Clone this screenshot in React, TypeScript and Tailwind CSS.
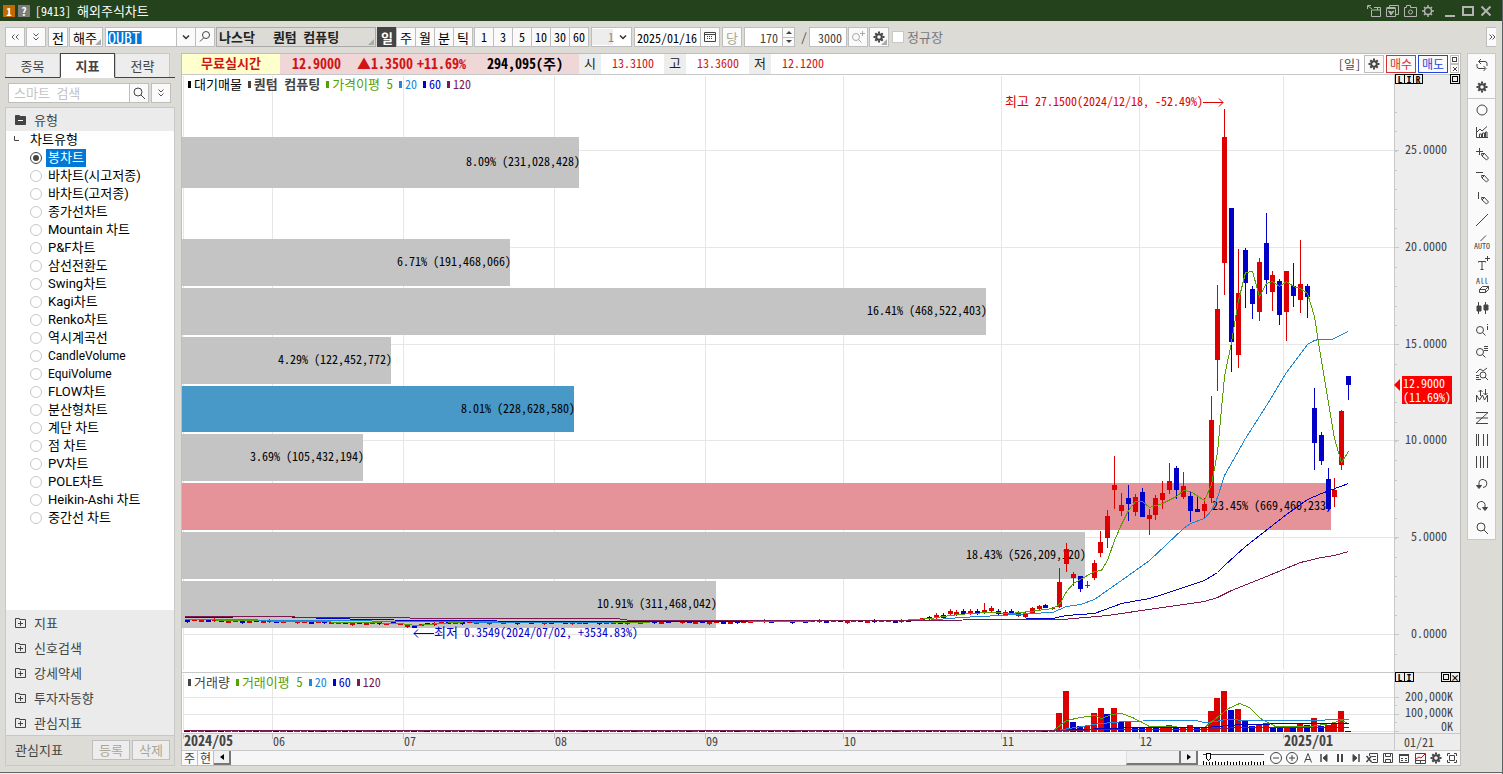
import React from 'react';
import clsx from 'clsx';

const RED = '#dc0000';
const BLUE = '#0000c8';
const GREEN = '#55a005';
const SKY = '#1e87d7';
const PLUM = '#7d1950';

// center x, high, low, body top, body bottom, r = up / b = down
type Candle = [number, number, number, number, number, 'r' | 'b'];

const candles: Candle[] = [
  [1032, 607, 613, 608, 613, 'r'], [1039, 605, 610, 606, 609, 'r'], [1045, 604, 608, 605, 608, 'b'],
  [1052, 607, 610, 608, 609, 'r'], [1059, 568, 608, 582, 607, 'r'], [1066, 543, 572, 549, 564, 'r'],
  [1073, 572, 586, 574, 578, 'r'], [1080, 576, 592, 576, 589, 'b'], [1087, 581, 588, 585, 586, 'r'],
  [1094, 560, 580, 563, 578, 'r'], [1100, 531, 557, 542, 553, 'r'], [1107, 510, 548, 516, 538, 'r'],
  [1114, 456, 509, 485, 490, 'r'], [1121, 493, 516, 505, 511, 'r'], [1128, 485, 521, 498, 504, 'b'],
  [1135, 494, 516, 497, 512, 'r'], [1142, 488, 517, 492, 517, 'b'], [1149, 509, 535, 515, 519, 'r'],
  [1155, 495, 520, 498, 515, 'r'], [1162, 481, 509, 493, 500, 'r'], [1169, 463, 494, 481, 490, 'r'],
  [1176, 466, 499, 468, 490, 'b'], [1183, 472, 499, 486, 497, 'r'], [1190, 492, 522, 496, 511, 'b'],
  [1197, 497, 512, 509, 512, 'b'], [1204, 498, 519, 504, 511, 'r'], [1211, 396, 503, 420, 498, 'r'],
  [1217, 285, 391, 309, 360, 'r'], [1224, 109, 295, 137, 263, 'r'], [1231, 208, 372, 208, 342, 'b'],
  [1238, 249, 368, 293, 355, 'r'], [1245, 248, 308, 250, 283, 'b'], [1252, 286, 319, 289, 304, 'b'],
  [1259, 258, 321, 262, 312, 'r'], [1266, 213, 294, 243, 280, 'b'], [1272, 271, 311, 275, 292, 'r'],
  [1279, 279, 325, 281, 315, 'b'], [1286, 271, 341, 271, 312, 'r'], [1293, 263, 307, 286, 296, 'b'],
  [1300, 240, 313, 284, 300, 'r'], [1307, 284, 318, 286, 297, 'b'], [1314, 388, 470, 408, 443, 'b'],
  [1321, 432, 465, 435, 461, 'b'], [1328, 468, 511, 479, 509, 'b'], [1334, 478, 507, 490, 497, 'r'],
  [1341, 410, 470, 411, 465, 'r'], [1348, 376, 400, 376, 385, 'b'],
];

// close levels of the quiet months, from May to the end of October
const flatLevels = [
  620, 619, 620, 620, 619, 620, 621, 620, 621, 621, 620, 621, 620, 621, 621, 620, 621, 621, 622, 621,
  621, 622, 622, 622, 623, 622, 623, 622, 622, 623, 622, 623, 625, 626, 624, 623, 623, 622, 622, 622,
  622, 621, 622, 621, 622, 621, 622, 621, 622, 621, 622, 621, 622, 622, 621, 622, 622, 622, 622, 621,
  622, 622, 622, 622, 622, 621, 622, 621, 621, 622, 621, 620, 621, 621, 622, 621, 622, 621, 622, 622,
  621, 621, 621, 620, 620, 621, 620, 620, 621, 620, 621, 620, 620, 621, 620, 620, 621, 620, 620, 621,
  620, 620, 620, 621, 620, 620, 619, 618, 617, 615, 615, 611, 612, 611, 611, 611, 610, 608, 611, 612,
  611, 613, 614,
];

const flatCandles: Candle[] = flatLevels.map((y, i) => {
  const x = 187 + Math.round(i * 6.87);
  const wick = i > 108 ? 2 : i % 4 === 0 ? 1 : 0;
  return [x, i === 116 ? 603 : y - wick, y + 2 + wick, y, i > 108 ? y + 3 : y + 2, (i * 7) % 5 < 2 ? 'b' : 'r'];
});

const profile = [
  { y: 137, h: 51, x: 579, label: '8.09% (231,028,428)', fill: '#c4c4c4' },
  { y: 239, h: 47, x: 510, label: '6.71% (191,468,066)', fill: '#c4c4c4' },
  { y: 288, h: 47, x: 986, label: '16.41% (468,522,403)', fill: '#c4c4c4' },
  { y: 337, h: 47, x: 391, label: '4.29% (122,452,772)', fill: '#c4c4c4' },
  { y: 386, h: 46, x: 574, label: '8.01% (228,628,580)', fill: '#4898c8' },
  { y: 434, h: 47, x: 363, label: '3.69% (105,432,194)', fill: '#c4c4c4' },
  { y: 483, h: 47, x: 1331, label: '23.45% (669,460,233)', fill: '#e59299' },
  { y: 532, h: 47, x: 1085, label: '18.43% (526,209,120)', fill: '#c4c4c4' },
  { y: 581, h: 47, x: 716, label: '10.91% (311,468,042)', fill: '#c4c4c4' },
];

const priceLines = [
  { color: GREEN, points: '189,619 240,620 360,622 400,623 415,625 440,623 470,621 600,622 700,621 900,620 930,618 950,615 970,613 990,612 1010,613 1030,611 1052,608 1059,604 1066,591 1073,583 1080,579 1094,571 1101,570 1107,560 1114,540 1121,524 1128,510 1135,501 1142,501 1149,507 1162,503 1176,496 1183,490 1190,491 1204,500 1211,484 1217,452 1224,376 1231,342 1238,300 1245,272 1252,271 1259,296 1266,283 1272,281 1279,286 1286,281 1293,286 1300,288 1307,293 1314,316 1318,342 1328,402 1334,438 1341,462 1348,451' },
  { color: SKY, points: '185,619 327,620 415,621 525,622 700,621 925,620 960,617 1000,615 1030,613 1052,612 1066,606 1080,604 1094,599 1101,594 1121,580 1149,560 1183,528 1190,523 1204,518 1211,510 1217,497 1224,475 1245,438 1266,405 1286,372 1307,344 1314,340 1318,339 1331,339 1336,337 1341,334 1348,331' },
  { color: BLUE, points: '185,617 279,616 327,618 416,620 575,621 925,620 1000,619 1052,618 1066,615 1094,613 1121,603 1149,598 1162,594 1204,580 1217,572 1224,565 1245,546 1286,514 1307,499 1321,493 1348,483' },
  { color: PLUM, points: '185,616 403,617 415,618 616,618 630,620 925,620 1000,619 1062,619 1107,615 1162,607 1204,601 1217,597 1231,590 1266,576 1300,562 1321,557 1334,555 1348,551' },
];

// left x, top y, color
const volumes: [number, number, 'r' | 'b'][] = [
  [1056, 713, 'r'], [1063, 691, 'r'], [1070, 722, 'b'], [1077, 726, 'b'], [1084, 726, 'r'], [1091, 713, 'r'],
  [1098, 708, 'r'], [1104, 714, 'b'], [1111, 708, 'r'], [1118, 722, 'b'], [1125, 722, 'r'], [1132, 727, 'b'],
  [1139, 727, 'b'], [1146, 727, 'r'], [1153, 727, 'b'], [1160, 727, 'r'], [1166, 725, 'r'], [1173, 727, 'b'],
  [1180, 727, 'r'], [1187, 725, 'r'], [1194, 727, 'b'], [1201, 727, 'r'], [1208, 711, 'r'], [1214, 698, 'r'],
  [1221, 691, 'r'], [1228, 710, 'b'], [1235, 709, 'r'], [1242, 721, 'b'], [1249, 726, 'b'], [1256, 725, 'r'],
  [1263, 723, 'r'], [1270, 727, 'b'], [1277, 727, 'b'], [1284, 727, 'r'], [1290, 727, 'b'], [1297, 723, 'r'],
  [1304, 725, 'b'], [1311, 718, 'r'], [1318, 726, 'b'], [1325, 725, 'r'], [1331, 723, 'r'], [1338, 711, 'r'],
  [1345, 731, 'b'],
];

const volumeLines = [
  { color: GREEN, points: '1053,730 1066,720 1080,717 1094,715 1101,718 1111,714 1121,713 1132,717 1149,726 1204,727 1214,719 1228,708 1239,703 1249,707 1260,718 1275,726 1310,726 1330,723 1341,720 1348,723' },
  { color: SKY, points: '1056,730 1075,727 1100,723 1125,721 1160,720 1195,720 1204,722 1215,721 1225,719 1250,720 1310,720 1340,719 1348,719' },
  { color: BLUE, points: '1056,730 1130,727 1205,727 1240,724 1300,723 1348,723' },
  { color: PLUM, points: '183,730 1056,730 1120,729 1200,729 1240,727 1348,727' },
];

const months = [
  { x: 183, label: '2024/05', bold: true },
  { x: 272, label: '06' },
  { x: 403, label: '07' },
  { x: 554, label: '08' },
  { x: 705, label: '09' },
  { x: 843, label: '10' },
  { x: 1001, label: '11' },
  { x: 1139, label: '12' },
  { x: 1283, label: '2025/01', bold: true },
];

const priceTicks = [
  { y: 150, label: '25.0000' },
  { y: 247, label: '20.0000' },
  { y: 344, label: '15.0000' },
  { y: 440, label: '10.0000' },
  { y: 537, label: '5.0000' },
  { y: 634, label: '0.0000' },
];

const chartTypes = [
  '봉차트', '바차트(시고저종)', '바차트(고저종)', '종가선차트', 'Mountain 차트', 'P&F차트', '삼선전환도',
  'Swing차트', 'Kagi차트', 'Renko차트', '역시계곡선', 'CandleVolume', 'EquiVolume', 'FLOW차트', '분산형차트',
  '계단 차트', '점 차트', 'PV차트', 'POLE차트', 'Heikin-Ashi 차트', '중간선 차트',
];

const Icon = ({ children, className }: { children: React.ReactNode; className?: string }) => (
  <svg viewBox="0 0 16 16" className={clsx('size-4 shrink-0 overflow-visible', className)} fill="none" stroke="currentColor" strokeWidth="1" aria-hidden="true">
    {children}
  </svg>
);

const Gear = ({ className }: { className?: string }) => (
  <Icon className={className}>
    <circle cx="8" cy="8" r="2.8" strokeWidth="2" />
    <path d="M8 2.5v2M8 11.500v2M2.500 8h2M11.500 8h2M4.300 4.300l1.200 1.200M10.500 10.500l1.200 1.200M4.300 11.700l1.200-1.200M10.500 5.500l1.200-1.200" strokeWidth="2" />
  </Icon>
);

const Magnifier = ({ className }: { className?: string }) => (
  <Icon className={className}>
    <circle cx="7" cy="7" r="4" />
    <path d="M10 10l4 4" />
  </Icon>
);

const Chevrons = ({ d, className }: { d: string; className?: string }) => (
  <Icon className={clsx('text-[#555]', className)}>
    <path d={d} />
  </Icon>
);

const DOUBLE_DOWN = 'M5.5 4.5L8 7l2.5-2.5M5.5 8.5L8 11l2.5-2.5';
const PENCIL = 'M7.5 7.5h3l4 4.5-2 2-4.5-4zM10.5 7.5l-2.5 2.500';

const sideTools: { name: string; icon: React.ReactNode }[] = [
  { name: '원', icon: <circle cx="8" cy="8" r="5" /> },
  { name: '차트 분석', icon: <><path d="M2.5 3v10.5H14M3 8l3-3 2 2 5-4.5" /><path d="M5.5 13v-3h2v3M8.5 13V9h2v4M11.5 13V8h1.5v5" /></> },
  { name: '십자 그리기', icon: <><path d="M5.5 2v7M2 5.5h7" /><path d={PENCIL} /></> },
  { name: '수평선', icon: <><path d="M2 4.5h7" /><path d={PENCIL} /></> },
  { name: '수직선', icon: <><path d="M4.5 2v7" /><path d={PENCIL} /></> },
  { name: '추세선', icon: <path d="M2 14L14 2" /> },
  { name: '자동 추세선', icon: <><path d="M6.5 7l5.5-5.5" /><text x="0" y="15" fontSize="8" stroke="none" fill="currentColor">AUTO</text></> },
  { name: '문자', icon: <><path d="M4.5 6.5V5.5h7v1M8 5.5v8M6.5 13.5h3M13.5 0v5M11 2.5h5" /></> },
  { name: '전체 지우기', icon: <><text x="2" y="6" fontSize="8" stroke="none" fill="currentColor">All</text><path d="M5.5 11.5l3-3h6l-3 3zM5.5 11.5v3h6l3-3v-3M11.5 11.5v3" /></> },
  { name: '봉 패턴', icon: <><path d="M4.5 2v12M11.5 2v12" /><path d="M3 6h4v5H3zM10 5h4v5h-4z" fill="currentColor" /></> },
  { name: '정보 보기', icon: <><circle cx="6" cy="8" r="3.5" /><path d="M8.5 10.5l3 3M13.5 2v1M13.5 4v4" /></> },
  { name: '목록 보기', icon: <><circle cx="6" cy="8" r="3.5" /><path d="M8.5 10.5l3 3M10 2.5h4M10 4.5h4M10 6.5h4" /></> },
  { name: '지표 찾기', icon: <><path d="M2 7l4-4 3 2 4-3M2 9.5h3M2 11.5h3M2 13.5h5" /><circle cx="9" cy="9" r="3" /><path d="M11 11l3 3" /></> },
  { name: '고저 표시', icon: <><path d="M2.5 14V7l3 5 3-5 2 5 3-5v7M6.5 2v6M4.5 4l2-2 2 2M11.5 1v6M9.5 5l2 2 2-2" /></> },
  { name: '지그재그', icon: <path d="M2 2.5h12L2 13.5h12M2 8h12" /> },
  { name: '피보나치 시간대', icon: <path d="M2.5 2v12M4.5 2v12M9.5 2v12M13.5 2v12" /> },
  { name: '등간격 시간대', icon: <path d="M2.5 2v12M6.5 2v12M9.5 2v12M13.5 2v12" /> },
  { name: '되돌리기', icon: <><path d="M5 10.5V6.5a4 4 0 1 1 4 5" /><path d="M2.5 9.5h5l-2.500 3z" fill="currentColor" /></> },
  { name: '다시 실행', icon: <><path d="M11 10V6.5a4 4 0 1 0-4 5" /><path d="M8.5 9.5h5l-2.500 3z" fill="currentColor" /></> },
  { name: '확대', icon: <><circle cx="7" cy="7" r="4" /><path d="M10 10l4 4" /></> },
];

const bottomTools: { name: string; icon: React.ReactNode }[] = [
  { name: '축소', icon: <><circle cx="8" cy="8" r="5.5" /><path d="M5 8h6" /></> },
  { name: '확대', icon: <><circle cx="8" cy="8" r="5.5" /><path d="M5 8h6M8 5v6" /></> },
  { name: '자동', icon: <path d="M4.5 12.5L8 3.5l3.5 9M5.5 9.5h5" /> },
  { name: '처음', icon: <><path d="M5 4v8" strokeWidth="1.5" /><path d="M11 4.5v7L7 8z" fill="currentColor" /></> },
  { name: '일시정지', icon: <path d="M6 4v8M10 4v8" strokeWidth="2" /> },
  { name: '끝', icon: <><path d="M11 4v8" strokeWidth="1.5" /><path d="M5 4.5v7L9 8z" fill="currentColor" /></> },
  { name: '내보내기', icon: <><path d="M5.5 6V3.5h8v9h-6M8 6.5h4M9 9.5h3" /><path d="M2.5 6l5 6M7.5 6l-5 6" strokeWidth="1.5" /></> },
  { name: '저장', icon: <path d="M3.5 3.5h9v9h-9zM5.5 3.5v3h5v-3M5.5 12.5v-3h5v3" /> },
  { name: '표', icon: <><path d="M3.5 4.500h9v8h-9z" /><path d="M3 5h10" strokeWidth="2" /><path d="M5 8.500h2M9 8.500h2M5 10.500h2M9 10.500h2" /></> },
  { name: '비교차트', icon: <><path d="M3.5 3.5h10v10h-10zM3.5 10.5h10M8.5 10.5v3" /><path d="M4 9l3-2 2 1 4-4" stroke="#c81414" /></> },
];

const Button = ({ label, className, children }: { label?: string; className?: string; children: React.ReactNode }) => (
  <button
    type="button"
    aria-label={label}
    className={clsx('flex h-5 shrink-0 items-center justify-center border border-[#bebebe] bg-[#fafafa] leading-none', className)}
  >
    {children}
  </button>
);

const Corner = () => <span className="absolute right-px bottom-px border-[3px] border-transparent border-r-[#aaa] border-b-[#aaa]" />;

const TitleBar = () => (
  <header className="flex h-[21px] items-center bg-[#24421b] pr-2 pl-[3px] text-white">
    <span className="flex size-3 items-center justify-center bg-[#c06a00] text-[11px] leading-3 font-bold">1</span>
    <span className="ml-[3px] flex size-3 items-center justify-center bg-[#7d7d7d] text-[11px] leading-3 font-bold">?</span>
    <h1 className="ml-[5px] text-xs">[9413] <span className="text-[13px]">해외주식차트</span></h1>
    <div className="ml-auto flex items-center gap-0.5 text-[#b4b4b4]">
      <button type="button" aria-label="창 분리">
        <Icon><path d="M5.5 7v6.5h9v-9H8M5.5 7h9M11.5 4v3M1.5 6V2.5H5M2 3l4 3" /></Icon>
      </button>
      <button type="button" aria-label="화면 목록">
        <Icon><path d="M5.5 4V2.5h9v9H12M2.5 5.5h9v8h-9zM2.5 4.5h9" /><path d="M4.5 8l2.5 4 3-4-2.500 1z" fill="currentColor" /></Icon>
      </button>
      <button type="button" aria-label="화면 캡처">
        <Icon><path d="M2.5 4.5h2v-2h4v2h6v9h-12z" /><circle cx="8.5" cy="9" r="2" /></Icon>
      </button>
      <button type="button" aria-label="설정">
        <Icon><circle cx="8" cy="8" r="3.5" strokeWidth="1.5" /><path d="M8 2v2M8 12v2M2 8h2M12 8h2M4 4l1.500 1.500M10.500 10.500L12 12M4 12l1.500-1.500M10.500 5.500L12 4" strokeWidth="1.5" /></Icon>
      </button>
      <button type="button" aria-label="최소화" className="ml-1">
        <Icon><path d="M3 13h10" strokeWidth="2" /></Icon>
      </button>
      <button type="button" aria-label="최대화">
        <Icon><path d="M3 4h10v8H3z" strokeWidth="2" /></Icon>
      </button>
      <button type="button" aria-label="닫기">
        <Icon><path d="M3.5 3.5l9 9M12.5 3.5l-9 9" strokeWidth="2" /></Icon>
      </button>
    </div>
  </header>
);

const Toolbar = () => (
  <div className="flex h-8 items-center pl-[5px] text-xs text-black">
    <Button label="이전" className="w-5"><Chevrons d="M7.5 5.5L5 8l2.5 2.5M11.5 5.5L9 8l2.5 2.5" /></Button>
    <Button label="더보기" className="ml-px w-5"><Chevrons d={DOUBLE_DOWN} /></Button>
    <Button className="ml-0.5 w-5 text-[13px]">전</Button>
    <Button className="relative ml-px w-[34px] pr-0.5 text-[13px]">해주<Corner /></Button>
    <div className="ml-0.5 flex h-5 w-[72px] items-center border border-[#bebebe] bg-white pl-0.5">
      <input aria-label="종목코드" defaultValue="QUBT" className="h-[13px] w-[34px] border-r border-[#f08c3c] bg-[#0078d7] text-base leading-[13px] text-white outline-none" />
    </div>
    <Button label="종목 목록" className="-ml-px w-5"><Icon className="text-[#333]"><path d="M5 6.5l3 3 3-3" strokeWidth="1.5" /></Icon></Button>
    <Button label="종목 검색" className="-ml-px w-5"><Icon className="text-[#444]"><circle cx="9" cy="6" r="3.5" /><path d="M6.5 9L3 12.5" /></Icon></Button>
    <div className="relative ml-px flex h-5 w-[160px] items-center border border-[#aaa] pl-0.5 text-[13px] font-bold text-[#222]">
      <span>나스닥</span>
      <span className="ml-[18px]">퀀텀 컴퓨팅</span>
      <Corner />
    </div>
    <div className="ml-px flex">
      {['일', '주', '월', '분', '틱'].map((unit, i) => (
        <Button key={unit} className={clsx('-mr-px w-5 text-[13px]', i === 0 && 'border-[#444]! bg-[#444]! font-bold text-white')}>
          {unit}
        </Button>
      ))}
    </div>
    <div className="ml-0.5 flex">
      {['1', '3', '5', '10', '30', '60'].map(n => (
        <Button key={n} className="-mr-px w-5">{n}</Button>
      ))}
    </div>
    <div className="relative ml-[3px] flex h-5 w-[41px] items-center border border-[#bebebe] bg-white">
      <select aria-label="주기" className="h-4 w-full appearance-none bg-linear-to-r from-[#ededed] from-55% to-white to-55% pl-4 text-[#888]">
        <option>1</option>
      </select>
      <Icon className="pointer-events-none absolute right-0 text-[#333]"><path d="M5 6.5l3 3 3-3" strokeWidth="1.5" /></Icon>
    </div>
    <input aria-label="조회일" defaultValue="2025/01/16" className="ml-0.5 h-5 w-[67px] border border-[#bebebe] bg-white pl-0.5" />
    <Button label="달력" className="-ml-px w-5">
      <Icon className="text-[#444]"><path d="M2.5 3.5h11v9h-11zM2.5 5.5h11" /><path d="M5 7.5h6M5 9.5h6" strokeDasharray="1 1" /></Icon>
    </Button>
    <Button className="ml-0.5 w-5 text-[13px] text-[#aaa695]">당</Button>
    <input aria-label="조회 개수" defaultValue="170" className="ml-0.5 h-5 w-[39px] border border-[#bebebe] bg-white pr-1 text-right text-[#444]" />
    <div className="-ml-px flex h-5 w-[13px] flex-col border border-[#bebebe] bg-[#fafafa]">
      <button type="button" aria-label="증가" className="flex flex-1 items-center justify-center border-b border-[#bebebe]">
        <span className="border-x-[3px] border-b-[3px] border-x-transparent border-b-[#444]" />
      </button>
      <button type="button" aria-label="감소" className="flex flex-1 items-center justify-center">
        <span className="border-x-[3px] border-t-[3px] border-x-transparent border-t-[#444]" />
      </button>
    </div>
    <span className="ml-1.5 text-[#444]">/</span>
    <input aria-label="최대 개수" defaultValue="3000" className="ml-0.5 h-5 w-[38px] border border-[#bebebe] bg-white pr-1 text-right text-[#444]" />
    <Button label="구간 확대" className="ml-px w-5 text-[#aaa]"><Icon><circle cx="6" cy="8" r="3.5" /><path d="M8.5 10.5l3 3M12.5 2v5M10 4.5h5" /></Icon></Button>
    <Button label="차트 설정" className="relative ml-px w-5 text-[#444]"><Gear /><Corner /></Button>
    <label className="ml-[3px] flex items-center gap-[3px] text-[13px] text-[#777]">
      <input type="checkbox" className="size-3 appearance-none border border-[#c8c8c8] bg-white checked:bg-[#444]" />
      정규장
    </label>
    <Button label="도구 더보기" className="mr-1.5 ml-auto w-2.5 border-r-0"><Chevrons d="M5.5 5.5L8 8l-2.5 2.5M8.5 5.5L11 8l-2.500 2.500" /></Button>
  </div>
);

const FolderIcon = ({ open }: { open?: boolean }) => (
  <Icon className="text-[#444]">
    <path d="M3.5 3.5h4v1h6v8h-10z" fill={open ? 'currentColor' : 'none'} />
    {open ? <path d="M6 8.5h5" stroke="#fff" /> : <path d="M6 8.5h5M8.5 6v5" />}
  </Icon>
);

const SidePanel = () => (
  <aside className="flex w-[170px] shrink-0 flex-col text-xs text-[#444]">
    <div role="tablist" className="flex h-[25px] border-b border-[#444]">
      {['종목', '지표', '전략'].map(tab => (
        <button
          key={tab}
          type="button"
          role="tab"
          aria-selected={tab === '지표'}
          className={clsx(
            'w-[55px] border text-[13px]',
            tab === '지표' ? '-mb-px border-[#444] border-b-white bg-white font-bold' : 'border-b-0 border-[#c8c8c8] bg-[#ededed]'
          )}
        >
          {tab}
        </button>
      ))}
    </div>
    <div className="flex h-[29px] items-center pl-[3px]">
      <input aria-label="스마트 검색" placeholder="스마트 검색" className="h-5 w-[122px] border border-[#bebebe] bg-white pl-[5px] text-[13px] placeholder:text-[#c4c4c4]" />
      <Button label="검색" className="-ml-px w-5"><Magnifier /></Button>
      <Button label="검색 옵션" className="ml-0.5 w-5"><Chevrons d={DOUBLE_DOWN} /></Button>
    </div>
    <div className="flex flex-1 flex-col border border-[#c8c8c8] bg-white">
      <button type="button" className="flex h-[23px] shrink-0 items-center gap-1.5 bg-[#ebebeb] pl-1.5 text-left text-[13px]">
        <FolderIcon open />
        유형
      </button>
      <fieldset className="flex-1 [font-family:Roboto,'Noto_Sans_CJK_KR',sans-serif] text-[13px] text-black">
        <legend className="flex h-[18px] items-center pl-1.5">
          <Icon className="text-[#444]"><path d="M2.5 4v4.5H7" /></Icon>
          <span className="ml-0.5">차트유형</span>
        </legend>
        {chartTypes.map((type, i) => (
          <label key={type} className="flex h-[18px] items-center pl-6">
            <span className="relative flex size-3 items-center justify-center">
              <input type="radio" name="chartType" defaultChecked={i === 0} className="peer size-3 appearance-none rounded-full border border-[#c8c8c8] checked:border-[#444]" />
              <span className="pointer-events-none absolute size-1.5 rounded-full peer-checked:bg-[#444]" />
            </span>
            <span className={clsx('ml-1 px-0.5 leading-[18px]', i === 0 && 'bg-[#0078d7] text-white', type.endsWith('Volume') && 'text-xs')}>
              {type}
            </span>
          </label>
        ))}
      </fieldset>
      <div className="bg-[#ebebeb] text-[13px]">
        {['지표', '신호검색', '강세약세', '투자자동향', '관심지표'].map(group => (
          <button key={group} type="button" className="flex h-[25px] w-full items-center gap-1.5 pl-1.5 text-left leading-4">
            <FolderIcon />
            {group}
          </button>
        ))}
      </div>
      <div className="flex h-[30px] items-center gap-0.5 border-t border-[#c8c8c8] bg-[#dcdbd5] pr-1 pb-0.5 pl-[9px] text-[13px]">
        <span className="mr-auto">관심지표</span>
        <Button className="w-[38px] bg-[#ededed]! text-[#aaa695]">등록</Button>
        <Button className="w-[38px] bg-[#ededed]! text-[#aaa695]">삭제</Button>
      </div>
    </div>
  </aside>
);

const QuoteBar = () => (
  <div className="flex h-[21px] items-stretch border-b border-[#c8c8c8] bg-white text-xs leading-[18px] text-[#d21414]">
    <strong className="w-[98px] bg-[#ffffcd] text-center text-[13px] leading-[18px]">무료실시간</strong>
    <div className="flex w-[299px] bg-[#f0d7d7] pl-3 text-sm leading-[18px] font-bold">
      <span>12.9000</span>
      <span className="ml-4">▲1.3500</span>
      <span className="ml-1">+11.69%</span>
      <span className="mr-4 ml-auto text-black">294,095(주)</span>
    </div>
    {[['시', '13.3100'], ['고', '13.3600'], ['저', '12.1200']].map(([name, value]) => (
      <React.Fragment key={name}>
        <span className="w-[22px] bg-[#ededed] text-center text-[13px] text-[#222]">{name}</span>
        <span className="w-[63px] pl-[11px]">{value}</span>
      </React.Fragment>
    ))}
    <div className="ml-auto flex items-center gap-0.5 pr-px text-[#444]">
      <span className="pr-px">[일]</span>
      <Button label="시세 설정" className="h-[18px]! w-5"><Gear /></Button>
      <Button className="h-[18px]! w-[30px] border-[#d23232]! text-xs text-[#d23232]">매수</Button>
      <Button className="h-[18px]! w-[30px] border-[#1e46dc]! text-xs text-[#1e46dc]">매도</Button>
      <div className="flex w-[9px] flex-col">
        <button type="button" aria-label="최대화" className="h-[9px] border border-[#bebebe] p-px"><span className="block h-full border border-[#444]" /></button>
        <button type="button" aria-label="닫기" className="flex h-[9px] items-center justify-center border border-[#bebebe]">
          <Icon className="size-2!"><path d="M4 4l8 8M12 4l-8 8" strokeWidth="2" /></Icon>
        </button>
      </div>
    </div>
  </div>
);

const Legend = ({ items }: { items: { label: string; className: string }[] }) => (
  <ul className="absolute top-px left-1.5 flex gap-1.5 text-xs leading-4">
    {items.map(({ label, className }) => (
      <li key={label} className={clsx('flex items-center gap-[3px] leading-4 whitespace-pre', className)}>
        <span className="h-[7px] w-[3px] bg-current" />
        {label}
      </li>
    ))}
  </ul>
);

const MA_ITEMS = [
  { label: '20', className: 'text-[#1e87d7]' },
  { label: '60', className: 'text-[#0000c8]' },
  { label: '120', className: 'text-[#7d1950]' },
];

const PaneButton = ({ children, label }: { children: React.ReactNode; label: string }) => (
  <button type="button" aria-label={label} className="-mr-px flex size-[10px] items-center justify-center border border-black bg-[#ededed] text-[9px] leading-none font-bold text-black">
    {children}
  </button>
);

const PriceChart = () => (
  <div className="relative border-b border-[#c8c8c8]">
    <svg viewBox="182 75 1278 597" className="block w-full text-xs" role="img" aria-label="퀀텀 컴퓨팅 일봉 차트">
      <rect x="182" y="75" width="1278" height="597" fill="#fff" />
      <g stroke="#e6e6e6" shapeRendering="crispEdges">
        {priceTicks.map(({ y }) => <line key={y} x1="184" x2="1394" y1={y + 0.5} y2={y + 0.5} />)}
        {months.map(({ x }) => <line key={x} x1={x + 0.5} x2={x + 0.5} y1="76" y2="670" />)}
      </g>
      {profile.map(bar => (
        <g key={bar.y}>
          <rect x="182" y={bar.y} width={bar.x - 182} height={bar.h} fill={bar.fill} />
          <text x={bar.x + 1} y={bar.y === 137 ? 166 : bar.y + 27} textAnchor="end">{bar.label}</text>
        </g>
      ))}
      <g shapeRendering="crispEdges">
        {[...flatCandles, ...candles].map(([x, high, low, top, bottom, dir]) => (
          <g key={x} fill={dir === 'r' ? RED : BLUE}>
            <rect x={x} y={high} width="1" height={low - high} />
            <rect x={x - 2} y={top} width="5" height={bottom - top} />
          </g>
        ))}
        {priceLines.map(({ color, points }) => (
          <polyline key={color} points={points} fill="none" stroke={color} transform="translate(0.5 0.5)" />
        ))}
      </g>
      <text x="1203" y="106" textAnchor="end" fill={RED}>
        <tspan className="text-[13px]">최고</tspan> 27.1500(2024/12/18, -52.49%)
      </text>
      <path d="M1203 102.500h20M1219 98.500l4 4-4 4" fill="none" stroke={RED} />
      <text x="434" y="637" fill={BLUE}>
        <tspan className="text-[13px]">최저</tspan> 0.3549(2024/07/02, +3534.83%)
      </text>
      <path d="M434 633.500h-20M418 629.500l-4 4 4 4" fill="none" stroke={BLUE} />

      <rect x="1394" y="75" width="66" height="597" fill="#ededed" />
      <g stroke="#c8c8c8" shapeRendering="crispEdges">
        <line x1="1394.5" x2="1394.5" y1="75" y2="672" />
        {Array.from({ length: 29 }, (_, i) => Math.round(112 + i * 19.35) + 0.5).map(y => (
          <line key={y} x1="1395" x2="1397" y1={y} y2={y} />
        ))}
        {priceTicks.map(({ y }) => <line key={y} x1="1395" x2="1399" y1={y + 0.5} y2={y + 0.5} />)}
      </g>
      <g fill="#444" textAnchor="end">
        {priceTicks.map(({ y, label }) => <text key={y} x="1447" y={y + 4}>{label}</text>)}
      </g>
      <path d="M1394 385l6-6v12z" fill="#f00" />
      <rect x="1402" y="376" width="50" height="28" fill="#f00" />
      <text x="1403" y="388" fill="#fff">12.9000</text>
      <text x="1403" y="402" fill="#fff">(11.69%)</text>
    </svg>
    <Legend
      items={[
        { label: '대기매물', className: 'text-black text-[13px]' },
        { label: '퀀텀 컴퓨팅', className: 'text-[#444] font-bold text-[13px]' },
        { label: '가격이평 5', className: 'text-[#55a005] text-[13px]' },
        ...MA_ITEMS,
      ]}
    />
    <div className="absolute -top-px right-0 flex w-[66px] pr-px pl-px">
      <PaneButton label="좌측 축">L</PaneButton>
      <PaneButton label="내부 축">I</PaneButton>
      <PaneButton label="우측 축">R</PaneButton>
      <span className="ml-auto"><PaneButton label="최대화"><span className="size-1.5 border border-black" /></PaneButton></span>
    </div>
  </div>
);

const VolumeChart = () => (
  <div className="relative border-b border-[#c8c8c8]">
    <svg viewBox="182 673 1278 60" className="block w-full overflow-visible text-xs" role="img" aria-label="거래량 차트">
      <rect x="182" y="673" width="1278" height="60" fill="#fff" />
      <g stroke="#e6e6e6" shapeRendering="crispEdges">
        {[697, 714, 731].map(y => <line key={y} x1="184" x2="1394" y1={y + 0.5} y2={y + 0.5} />)}
        {months.map(({ x }) => <line key={x} x1={x + 0.5} x2={x + 0.5} y1="674" y2="731" />)}
      </g>
      <g shapeRendering="crispEdges">
        {flatCandles.concat(candles.slice(0, 4)).map(([x, , , , , dir]) => (
          <rect key={x} x={x - 3} y="731" width="6" height="1" fill={dir === 'r' ? RED : BLUE} />
        ))}
        {volumes.map(([x, y, dir]) => (
          <rect key={x} x={x} y={y} width="6" height={732 - y} fill={dir === 'r' ? RED : BLUE} />
        ))}
        {volumeLines.map(({ color, points }) => (
          <polyline key={color} points={points} fill="none" stroke={color} transform="translate(0.5 0.5)" />
        ))}
      </g>
      <rect x="1394" y="673" width="66" height="60" fill="#ededed" />
      <path d="M1394.5 673v60M1395 697.5h4M1395 705.5h2M1395 714.5h4M1395 722.5h2M1395 731.5h4" stroke="#c8c8c8" shapeRendering="crispEdges" />
      <g fill="#444" textAnchor="end">
        <text x="1453" y="701">200,000K</text>
        <text x="1453" y="717">100,000K</text>
        <text x="1453" y="731">0K</text>
      </g>
    </svg>
    <Legend
      items={[
        { label: '거래량', className: 'text-[#444] text-[13px]' },
        { label: '거래이평 5', className: 'text-[#55a005] text-[13px]' },
        ...MA_ITEMS,
      ]}
    />
    <div className="absolute -top-px right-0 flex w-[66px] pr-px pl-px">
      <PaneButton label="좌측 축">L</PaneButton>
      <PaneButton label="내부 축">I</PaneButton>
      <span className="ml-auto flex">
        <PaneButton label="최대화"><span className="size-1.5 border border-black" /></PaneButton>
        <PaneButton label="닫기">×</PaneButton>
      </span>
    </div>
  </div>
);

const TimeAxis = () => (
  <svg viewBox="182 734 1278 17" className="block w-full overflow-visible text-xs" role="img" aria-label="시간 축">
    <rect x="182" y="734" width="1278" height="17" fill="#ededed" />
    <path d="M1394.5 734v17M182 750.5h1278" stroke="#c8c8c8" shapeRendering="crispEdges" />
    {months.map(({ x, label, bold }) => (
      <g key={x}>
        <path d={`M${x + 0.5} 734v5`} stroke="#bebebe" />
        <text x={x + 1} y="746" fill="#444" className={bold ? 'text-sm font-bold' : undefined}>{label}</text>
      </g>
    ))}
    <text x="1404" y="747" fill="#444">01/21</text>
  </svg>
);

const ScrollRow = () => (
  <div className="flex h-[14px] items-stretch bg-[#fafafa] text-[#444]">
    <button type="button" className="w-4 border-r border-[#bebebe] text-xs leading-[14px]">주</button>
    <button type="button" className="w-4 border-r border-[#bebebe] text-xs leading-[14px]">현</button>
    <button type="button" aria-label="왼쪽으로" className="flex w-[17px] items-center justify-center border-r-2 border-b-2 border-[#777] bg-[#f0f0f0]">
      <span className="border-y-[3px] border-r-4 border-y-transparent border-r-black" />
    </button>
    <div className="flex flex-1 justify-end bg-[#f6f6f6]">
      <div className="w-[55px] border-r-2 border-b-2 border-l border-[#777] border-l-[#ddd] bg-[#f0f0f0]" />
    </div>
    <button type="button" aria-label="오른쪽으로" className="flex w-[17px] items-center justify-center border-r-2 border-b-2 border-[#777] bg-[#f0f0f0]">
      <span className="border-y-[3px] border-l-4 border-y-transparent border-l-black" />
    </button>
    <div className="relative ml-[5px] w-[61px]">
      <input type="range" aria-label="차트 간격" defaultValue="8" className="absolute inset-0 w-full opacity-0" />
      <svg viewBox="0 0 61 14" className="pointer-events-none h-[14px] w-full" shapeRendering="crispEdges" aria-hidden="true">
        <path d="M0 3.5h61" stroke="#444" />
        {Array.from({ length: 21 }, (_, i) => (
          <rect key={i} x={i * 3} y={i % 4 === 0 ? 10 : 11} width="1" height="4" fill="#000" />
        ))}
        <path d="M3.5 2.5h4v5l-2 2-2-2z" fill="#fff" stroke="#000" />
      </svg>
    </div>
    <div className="flex items-center pl-1">
      {bottomTools.map(({ name, icon }) => (
        <button key={name} type="button" aria-label={name}><Icon>{icon}</Icon></button>
      ))}
      <button type="button" aria-label="설정"><Gear /></button>
      <button type="button" aria-label="전체 화면">
        <Icon><path d="M5.5 5.5h5v5h-5zM3.5 6V3.5H6M12.5 6V3.5H10M3.5 10v2.5H6M12.5 10v2.5H10" /></Icon>
      </button>
    </div>
  </div>
);

const SideTools = () => (
  <nav aria-label="그리기 도구" className="flex w-[29px] shrink-0 flex-col items-center self-start border border-[#c8c8c8] bg-[#fafafa] text-[#444]">
    <div className="flex h-[45px] w-full flex-col items-center justify-around border-b border-[#c8c8c8]">
      <button type="button" aria-label="새로고침">
        <Icon><path d="M5 4.5h6a2 2 0 0 1 2 2V9M11 11.5H5a2 2 0 0 1-2-2V7M7 2L4.5 4.5 7 7M9.5 9l2.5 2.5L9.5 14" /></Icon>
      </button>
      <button type="button" aria-label="도구 설정"><Gear /></button>
    </div>
    {sideTools.map(({ name, icon }) => (
      <button key={name} type="button" aria-label={name} className="flex h-[22px] w-full items-center justify-center">
        <Icon>{icon}</Icon>
      </button>
    ))}
  </nav>
);

export default function App() {
  return (
    <div className="flex min-h-screen flex-col border-r border-[#5a6464] bg-[#dcdbd5] [font-family:'Noto_Sans_Mono_CJK_KR','Noto_Sans_CJK_KR',sans-serif]">
      <TitleBar />
      <Toolbar />
      <main className="flex flex-1 gap-1.5 px-1.5 pb-1.5 pl-[5px]">
        <SidePanel />
        <section className="min-w-0 flex-1 self-start border border-[#bebebe]">
          <QuoteBar />
          <PriceChart />
          <VolumeChart />
          <TimeAxis />
          <ScrollRow />
        </section>
        <SideTools />
      </main>
      <footer className="h-0.5 border-t border-[#646464] bg-[#f0f0f0]" />
    </div>
  );
}
